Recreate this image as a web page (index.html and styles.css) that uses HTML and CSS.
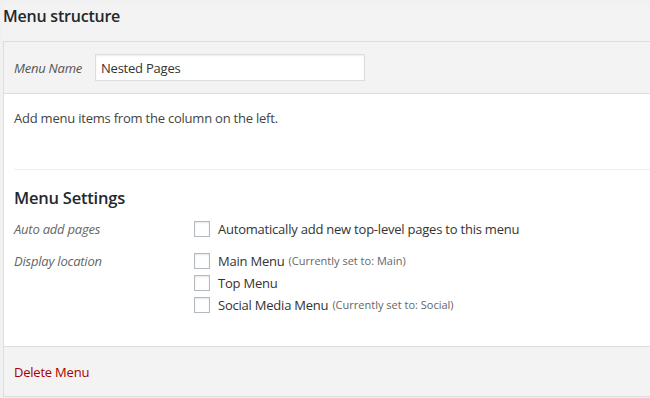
FILE: index.html
```html
<!DOCTYPE html>
<html lang="en">
<head>
    <meta charset="UTF-8">
    <title>Menu structure</title>
    <link rel="stylesheet" href="styles.css">
</head>
<body>

    <div class="menu-edit">
        <h3 class="title">Menu structure</h3>

        <div class="menu-box">
            <div class="menu-header">
                <label class="name-label" for="menu-name">Menu Name</label>
                <input id="menu-name" class="name-input" type="text" value="Nested Pages">
            </div>

            <div class="menu-body">
                <p class="hint">Add menu items from the column on the left.</p>

                <div class="settings">
                    <h3 class="settings-title">Menu Settings</h3>

                    <div class="setting-row auto-add">
                        <span class="setting-label">Auto add pages</span>
                        <div class="options">
                            <label class="option"><span class="check"></span>Automatically add new top-level pages to this menu</label>
                        </div>
                    </div>

                    <div class="setting-row">
                        <span class="setting-label">Display location</span>
                        <div class="options">
                            <label class="option"><span class="check"></span>Main Menu <small class="note">(Currently set to: Main)</small></label>
                            <label class="option"><span class="check"></span>Top Menu</label>
                            <label class="option"><span class="check"></span>Social Media Menu <small class="note">(Currently set to: Social)</small></label>
                        </div>
                    </div>
                </div>
            </div>

            <!-- footer -->
            <div class="menu-footer">
                <a class="delete-link" href="#">Delete Menu</a>
            </div>
        </div>
    </div>

</body>
</html>
```

FILE: styles.css
```css
body { margin: 0; background: #f1f1f1; font-family: "Open Sans", Arial, sans-serif; font-size: 13px; color: #444; letter-spacing: -0.22px; }
.menu-edit { margin: 5px 0 0 3px; background: #f3f3f3; }
.title { margin: 0; height: 36px; line-height: 22px; font-size: 16px; font-weight: 600; color: #23282d; }
.menu-box { border: 1px solid #ddd; border-right: none; background: #fff; }
.menu-header { display: flex; align-items: center; height: 51px; padding: 0 10px; background: #f3f3f3; border-bottom: 1px solid #ddd; }
.name-label { font-style: italic; color: #555; width: 81px; }
.name-input { box-sizing: border-box; width: 270px; height: 27px; margin: 0; padding: 0 5px; border: 1px solid #ddd; box-shadow: inset 0 1px 2px rgba(0,0,0,.07); font: inherit; font-size: 13px; color: #333; letter-spacing: -0.22px; }
.menu-body { padding: 0 0 0 10px; height: 252px; }
.hint { margin: 0; padding-top: 15px; line-height: 18px; }
.settings { margin-top: 42px; border-top: 1px solid #eee; }
.settings-title { margin: 0; padding-top: 17px; line-height: 22px; font-size: 16.5px; font-weight: 600; color: #23282d; }
.setting-row { display: flex; margin-top: 14px; }
.setting-row.auto-add { margin-top: 11px; }
.setting-label { width: 180px; font-style: italic; color: #666; line-height: 18px; }
.options { display: flex; flex-direction: column; gap: 4px; }
.option { display: flex; align-items: center; line-height: 18px; color: #333; white-space: nowrap; }
.check { box-sizing: border-box; width: 16px; height: 16px; margin-right: 8px; border: 1px solid #b4b9be; background: #fff; box-shadow: inset 0 1px 2px rgba(0,0,0,.1); }
.note { margin-left: 4px; font-size: 11px; color: #666; letter-spacing: 0; }
.menu-footer { height: 49px; padding: 0 10px; display: flex; align-items: center; background: #f3f3f3; border-top: 1px solid #ddd; }
.delete-link { color: #a00; text-decoration: none; }
```
